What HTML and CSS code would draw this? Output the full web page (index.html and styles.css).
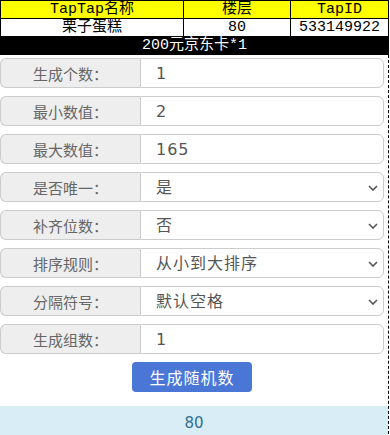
FILE: index.html
```html
<!DOCTYPE html>
<html lang="zh-CN">
<head>
    <meta charset="UTF-8">
    <meta name="viewport" content="width=device-width, initial-scale=1.0">
    <title>随机数生成器</title>
    <link rel="stylesheet" href="styles.css">
</head>
<body>
    <table class="prize">
        <tr class="head">
            <td class="c1">TapTap名称</td>
            <td class="c2">楼层</td>
            <td class="c3">TapID</td>
        </tr>
        <tr>
            <td>栗子蛋糕</td>
            <td>80</td>
            <td>533149922</td>
        </tr>
        <tr class="award">
            <td colspan="3">200元京东卡*1</td>
        </tr>
    </table>

    <div class="page">
        <form class="gen">
            <div class="group">
                <span class="addon">生成个数：</span>
                <input class="field" type="text" value="1">
            </div>
            <div class="group">
                <span class="addon">最小数值：</span>
                <input class="field" type="text" value="2">
            </div>
            <div class="group">
                <span class="addon">最大数值：</span>
                <input class="field" type="text" value="165">
            </div>
            <div class="group">
                <span class="addon">是否唯一：</span>
                <div class="pick">
                    <select class="field"><option>是</option><option>否</option></select>
                    <svg class="caret" width="10" height="6" viewBox="0 0 10 6"><path d="M1 1l4 4 4-4" fill="none" stroke="#555" stroke-width="1.6"/></svg>
                </div>
            </div>
            <div class="group">
                <span class="addon">补齐位数：</span>
                <div class="pick">
                    <select class="field"><option>否</option><option>是</option></select>
                    <svg class="caret" width="10" height="6" viewBox="0 0 10 6"><path d="M1 1l4 4 4-4" fill="none" stroke="#555" stroke-width="1.6"/></svg>
                </div>
            </div>
            <div class="group">
                <span class="addon">排序规则：</span>
                <div class="pick">
                    <select class="field"><option>从小到大排序</option><option>从大到小排序</option></select>
                    <svg class="caret" width="10" height="6" viewBox="0 0 10 6"><path d="M1 1l4 4 4-4" fill="none" stroke="#555" stroke-width="1.6"/></svg>
                </div>
            </div>
            <div class="group">
                <span class="addon">分隔符号：</span>
                <div class="pick">
                    <select class="field"><option>默认空格</option><option>逗号</option></select>
                    <svg class="caret" width="10" height="6" viewBox="0 0 10 6"><path d="M1 1l4 4 4-4" fill="none" stroke="#555" stroke-width="1.6"/></svg>
                </div>
            </div>
            <div class="group">
                <span class="addon">生成组数：</span>
                <input class="field" type="text" value="1">
            </div>
            <div class="actions">
                <button type="button" class="btn">生成随机数</button>
            </div>
        </form>
        <div class="result">80</div>
    </div>
</body>
</html>
```

FILE: styles.css
```css
body {
    margin: 0;
    padding: 0;
    background: #fff;
    font-family: "Noto Sans CJK SC", "Noto Sans", sans-serif;
    color: #555;
}
.prize {
    width: 389px;
    border-collapse: collapse;
    font-family: "Liberation Mono", "Noto Sans CJK SC", monospace;
    font-size: 15px;
    line-height: 17px;
    color: #000;
    text-align: center;
}
.prize td {
    border: 1px solid #000;
    padding: 0;
    height: 17px;
}
.prize .c1 { width: 182px; }
.prize .c2 { width: 106px; }
.head td {
    background: #ffff00;
}
.award td {
    background: #000;
    color: #fff;
}
.page {
    width: 388px;
    border-right: 1px dashed #000;
}
.gen {
    padding: 3px 4px 0 0;
    margin: 0;
}
.group {
    display: flex;
    height: 30px;
    margin-bottom: 8px;
}
.addon {
    width: 139px;
    flex: none;
    display: flex;
    align-items: center;
    justify-content: center;
    background: #eee;
    border: 1px solid #ccc;
    border-right: none;
    border-radius: 6px 0 0 6px;
    font-size: 15px;
    color: #666;
}
.field {
    flex: 1;
    min-width: 0;
    height: 30px;
    box-sizing: border-box;
    border: 1px solid #ccc;
    border-radius: 0 6px 6px 0;
    padding: 0 15px;
    font-family: "DejaVu Sans", "Noto Sans CJK SC", sans-serif;
    font-size: 16px;
    letter-spacing: 1px;
    color: #555;
    background: #fff;
    outline: none;
}
.pick {
    flex: 1;
    display: flex;
    position: relative;
}
.pick select {
    appearance: none;
    -webkit-appearance: none;
    width: 100%;
}
.caret {
    position: absolute;
    right: 6px;
    top: 13px;
    pointer-events: none;
}
.actions {
    display: flex;
    justify-content: center;
    margin-bottom: 14px;
}
.btn {
    width: 120px;
    height: 30px;
    border: none;
    border-radius: 4px;
    background: #4a76d6;
    color: #fff;
    font-family: "Noto Sans CJK SC", "Noto Sans", sans-serif;
    font-size: 16px;
    letter-spacing: 1px;
    cursor: pointer;
}
.result {
    background: #d9edf7;
    color: #31708f;
    text-align: center;
    font-family: "DejaVu Sans", sans-serif;
    font-size: 15px;
    padding-top: 8px;
    height: 40px;
}
```
